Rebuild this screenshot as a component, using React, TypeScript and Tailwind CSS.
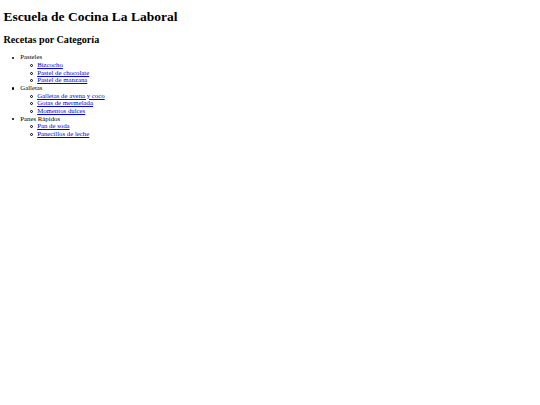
const categorias = [
  { nombre: 'Pasteles', recetas: ['Bizcocho', 'Pastel de chocolate', 'Pastel de manzana'] },
  { nombre: 'Galletas', recetas: ['Galletas de avena y coco', 'Gotas de mermelada', 'Momentos dulces'] },
  { nombre: 'Panes Rápidos', recetas: ['Pan de soda', 'Panecillos de leche'] },
]

export default function App() {
  return (
    <div className="px-[3.375px] font-['Liberation_Serif','Times_New_Roman',serif] text-black text-[6.8px] leading-[normal] bg-white min-h-[405px]">
      <h1 className="text-[13.5px] font-bold my-[9.05px] leading-[normal]">Escuela de Cocina La Laboral</h1>
      <h2 className="text-[10.125px] font-bold my-[8.4px] leading-[normal]">Recetas por Categoría</h2>
      <ul className="pl-[16.875px] my-[6.5px] leading-[7.65px]">
        {categorias.map(c => (
          <li key={c.nombre}>
            <span className="inline-block w-[2.2px] h-[2.2px] rounded-full bg-black align-middle ml-[-8.1px] mr-[5.9px]" />
            {c.nombre}
            <ul className="pl-[16.875px]">
              {c.recetas.map(r => (
                <li key={r}>
                  <span className="inline-block w-[3px] h-[3px] rounded-full border-[0.6px] border-black align-middle ml-[-7px] mr-[4px]" />
                  <a href="#" className="text-[#0000ee] underline">{r}</a>
                </li>
              ))}
            </ul>
          </li>
        ))}
      </ul>
    </div>
  )
}
